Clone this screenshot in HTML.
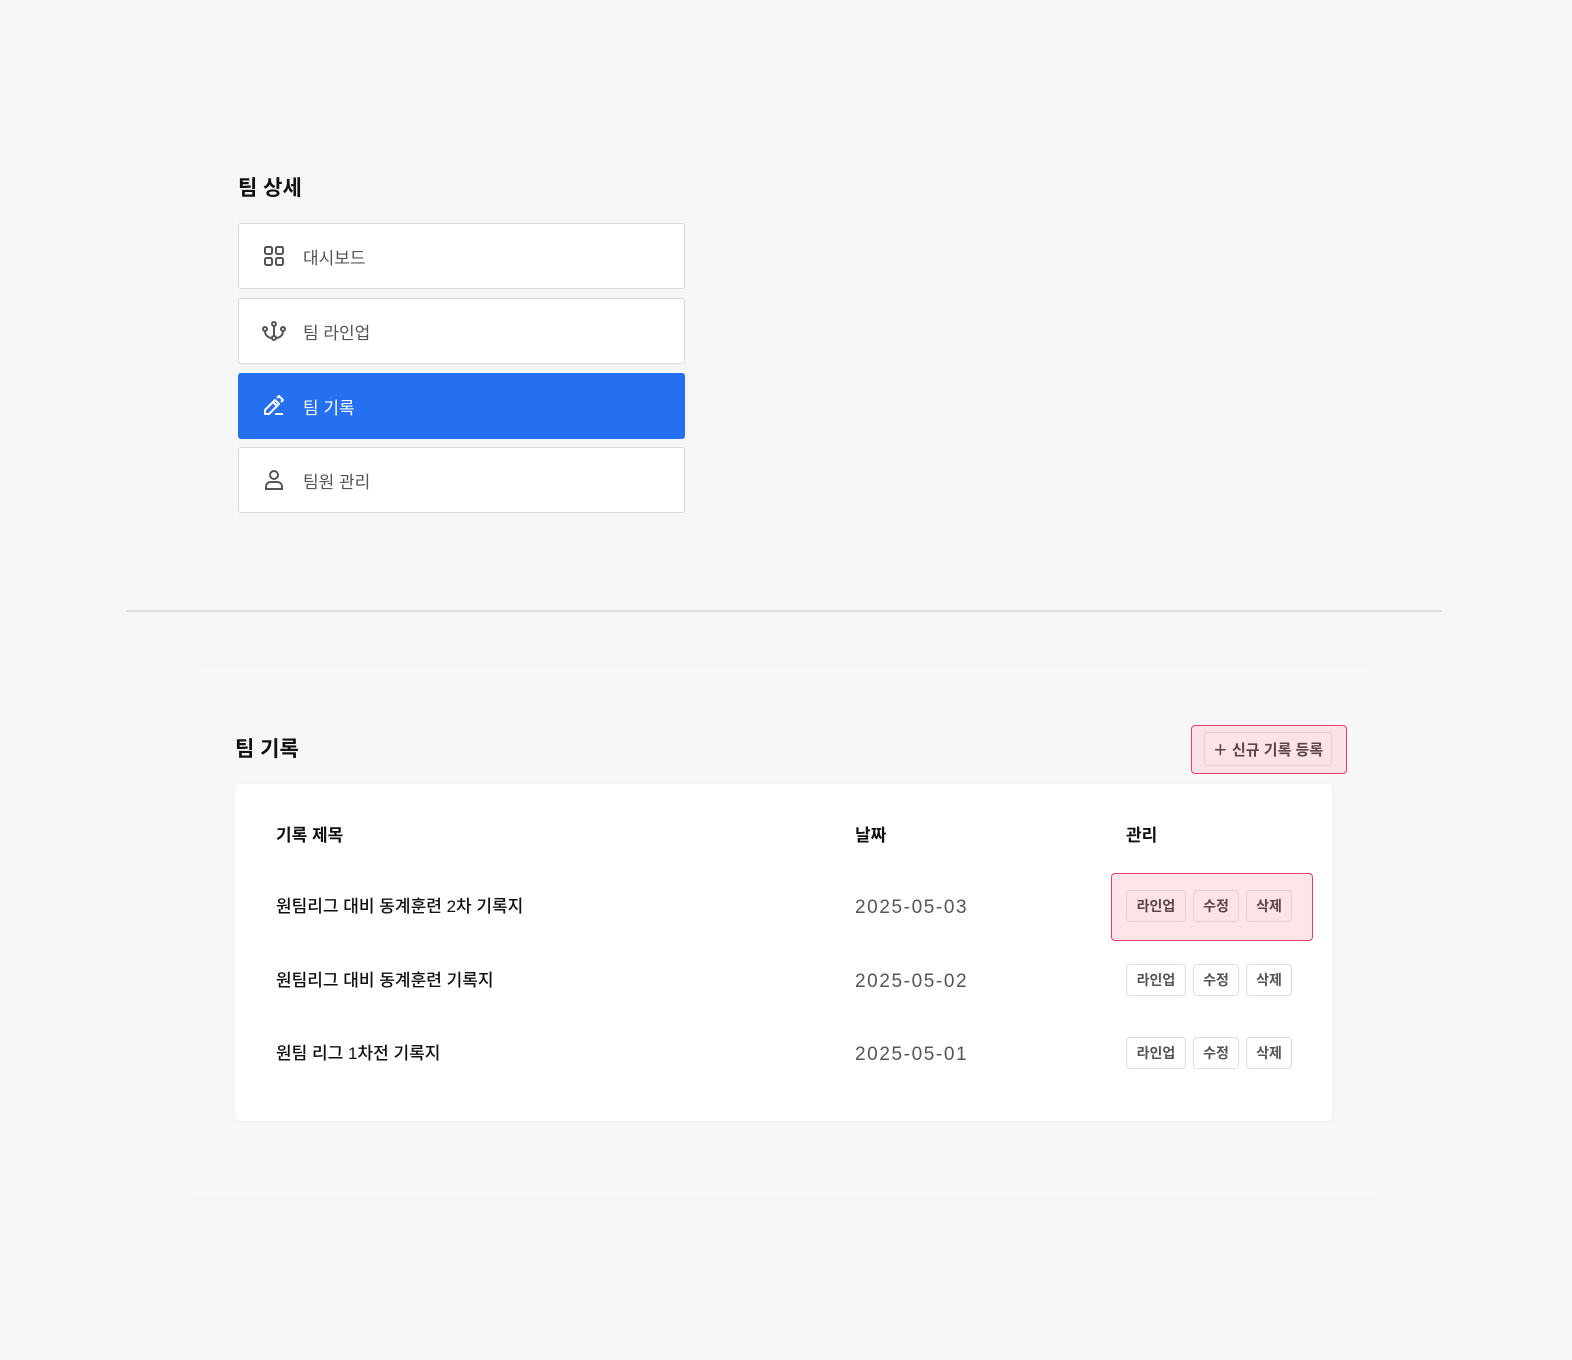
<!DOCTYPE html>
<html><head><meta charset="utf-8"><style>
*{box-sizing:border-box;margin:0;padding:0}
body{width:1572px;height:1360px;background:#f5f6f8;font-family:"Liberation Sans","Noto Sans CJK KR",sans-serif;position:relative;overflow:hidden;color:#111}
.abs{position:absolute}
h2{position:absolute;font-size:21px;font-weight:700;color:#111;line-height:1}
.nav{position:absolute;left:238px;width:447px;height:66px;background:#fff;border:1px solid #d8d9dc;border-radius:3px;display:flex;align-items:center;padding-left:22px;font-size:17px;color:#555}
.nav svg{width:26px;height:26px;margin-right:16px;flex:none}
.nav.on{background:#256ff1;border-color:#256ff1;color:#fff}
.panel{left:192px;top:668px;width:1184px;height:528px;background:#f7f7f8;border-radius:6px}
.card{left:235px;top:784px;width:1097px;height:337px;background:#fff;border-radius:6px;box-shadow:0 1px 4px rgba(0,0,0,.04)}
.th{position:absolute;font-size:17px;font-weight:700;color:#111;line-height:1}
.td{position:absolute;font-size:17px;color:#111;line-height:1;font-weight:500}
.dt{position:absolute;font-size:19px;color:#555;line-height:1;letter-spacing:1.6px}
.btns{position:absolute;left:1126px;display:flex;gap:7px}
.b{height:32px;border:1.5px solid #ddd;border-radius:4px;font-size:14px;font-weight:700;color:#555;display:flex;align-items:center;justify-content:center;background:#fff}
.hl .b{background:#fbe3e6;border-color:#ecccd0;color:#5c4549}
</style></head><body>
<h2 style="left:238px;top:178px">팀 상세</h2>

<div class="nav" style="top:223px"><svg viewBox="0 0 26 26" fill="none" stroke="#555" stroke-width="2"><rect x="4" y="4" width="7" height="7" rx="1.5"/><rect x="15" y="4" width="7" height="7" rx="1.5"/><rect x="4" y="15" width="7" height="7" rx="1.5"/><rect x="15" y="15" width="7" height="7" rx="1.5"/></svg>대시보드</div>
<div class="nav" style="top:298px"><svg viewBox="0 0 26 26" fill="none" stroke="#555" stroke-width="2"><circle cx="13" cy="6" r="2"/><circle cx="13" cy="20" r="2"/><circle cx="4" cy="11" r="2"/><circle cx="22" cy="11" r="2"/><path d="M13 8v10M4 13c0 5 4 7 7 7M22 13c0 5-4 7-7 7"/></svg>팀 라인업</div>
<div class="nav on" style="top:373px"><svg viewBox="0 0 26 26" fill="none" stroke="#fff" stroke-width="2" stroke-linejoin="round"><path d="M4 21v-4l10-10 4 4-10 10z M12 9l4 4 M16 5l2-2 4 4-2 2 M14 21h8"/></svg>팀 기록</div>
<div class="nav" style="top:447px"><svg viewBox="0 0 26 26" fill="none" stroke="#555" stroke-width="2"><circle cx="13" cy="8" r="4"/><path d="M5 22v-2c0-3 2-5 5-5h6c3 0 5 2 5 5v2z"/></svg>팀원 관리</div>

<div class="abs" style="left:126px;top:610px;width:1316px;height:2px;background:#dcdde0"></div>

<div class="abs panel"></div>
<h2 style="left:235px;top:739px">팀 기록</h2>
<div class="abs" style="left:1191px;top:725px;width:156px;height:49px;background:#fbe2e6;border:1.5px solid #e8406a;border-radius:4px"></div>
<div class="abs b" style="left:1204px;top:732px;width:128px;height:34px;background:#fbe3e6;border-color:#ecccd0;color:#5c4549;font-size:15px">＋ 신규 기록 등록</div>

<div class="abs card"></div>
<div class="th" style="left:276px;top:827px">기록 제목</div>
<div class="th" style="left:855px;top:827px">날짜</div>
<div class="th" style="left:1126px;top:827px">관리</div>

<div class="abs" style="left:1111px;top:873px;width:202px;height:68px;background:#fde5e9;border:1.5px solid #e8406a;border-radius:4px"></div>

<div class="td" style="left:276px;top:898px">원팀리그 대비 동계훈련 2차 기록지</div>
<div class="dt" style="left:855px;top:898px">2025-05-03</div>
<div class="btns hl" style="top:890px"><div class="b" style="width:60px">라인업</div><div class="b" style="width:46px">수정</div><div class="b" style="width:46px">삭제</div></div>

<div class="td" style="left:276px;top:972px">원팀리그 대비 동계훈련 기록지</div>
<div class="dt" style="left:855px;top:972px">2025-05-02</div>
<div class="btns" style="top:964px"><div class="b" style="width:60px">라인업</div><div class="b" style="width:46px">수정</div><div class="b" style="width:46px">삭제</div></div>

<div class="td" style="left:276px;top:1045px">원팀 리그 1차전 기록지</div>
<div class="dt" style="left:855px;top:1045px">2025-05-01</div>
<div class="btns" style="top:1037px"><div class="b" style="width:60px">라인업</div><div class="b" style="width:46px">수정</div><div class="b" style="width:46px">삭제</div></div>
</body></html>
